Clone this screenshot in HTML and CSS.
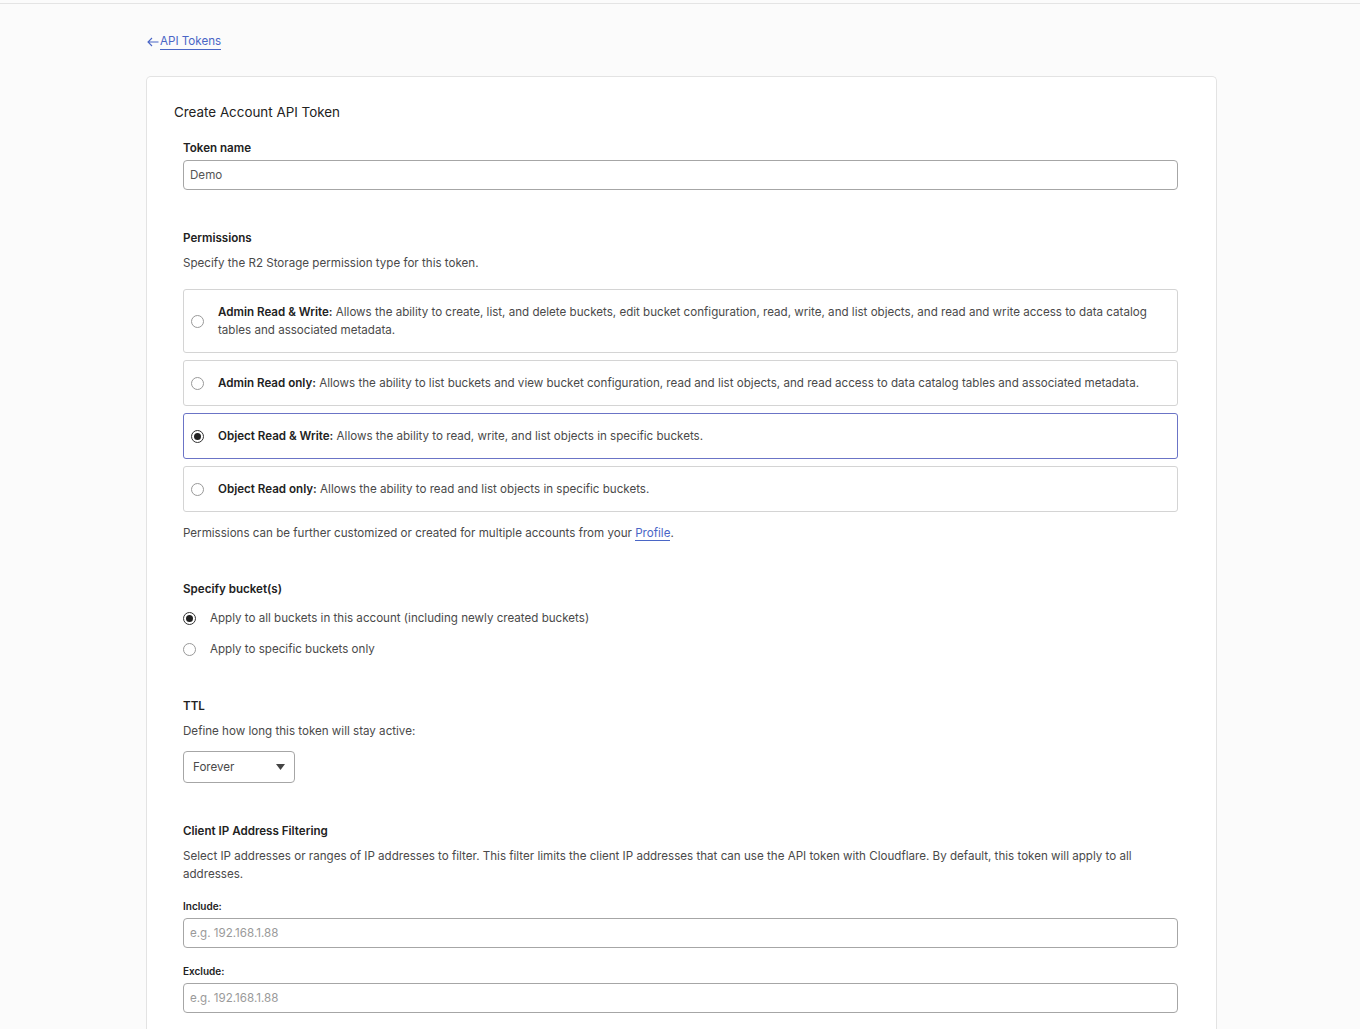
FILE: index.html
```html
<!DOCTYPE html>
<html lang="en">
<head>
    <meta charset="UTF-8">
    <meta name="viewport" content="width=device-width, initial-scale=1.0">
    <title>Create Account API Token</title>
    <link rel="stylesheet" href="styles.css">
</head>
<body>
    <div class="topbar"></div>
    <div class="page">
        <a class="back-link" href="#">
            <svg class="arrow" width="12" height="10" viewBox="0 0 12 10"><path d="M11.5 5H1M5 1L1 5l4 4" fill="none" stroke="#4a66c6" stroke-width="1.1"/></svg>
            <span class="back-text">API Tokens</span>
        </a>

        <div class="card">
            <h2 class="card-title">Create Account API Token</h2>
            <form class="token-form">
                <div class="field">
                    <label class="label" for="tokenName">Token name</label>
                    <input class="text-input" type="text" id="tokenName" value="Demo">
                </div>

                <div class="section">
                    <div class="label">Permissions</div>
                    <p class="help">Specify the R2 Storage permission type for this token.</p>
                    <div class="options">
                        <label class="option">
                            <input type="radio" name="perm">
                            <span><b>Admin Read &amp; Write:</b> Allows the ability to create, list, and delete buckets, edit bucket configuration, read, write, and list objects, and read and write access to data catalog tables and associated metadata.</span>
                        </label>
                        <label class="option">
                            <input type="radio" name="perm">
                            <span><b>Admin Read only:</b> Allows the ability to list buckets and view bucket configuration, read and list objects, and read access to data catalog tables and associated metadata.</span>
                        </label>
                        <label class="option selected">
                            <input type="radio" name="perm" checked>
                            <span><b>Object Read &amp; Write:</b> Allows the ability to read, write, and list objects in specific buckets.</span>
                        </label>
                        <label class="option">
                            <input type="radio" name="perm">
                            <span><b>Object Read only:</b> Allows the ability to read and list objects in specific buckets.</span>
                        </label>
                    </div>
                    <p class="note">Permissions can be further customized or created for multiple accounts from your <a href="#">Profile</a>.</p>
                </div>

                <div class="section">
                    <div class="label">Specify bucket(s)</div>
                    <div class="radio-list">
                        <label class="radio-row"><input type="radio" name="buckets" checked> Apply to all buckets in this account (including newly created buckets)</label>
                        <label class="radio-row"><input type="radio" name="buckets"> Apply to specific buckets only</label>
                    </div>
                </div>

                <div class="section">
                    <div class="label">TTL</div>
                    <p class="help">Define how long this token will stay active:</p>
                    <div class="select">
                        <span>Forever</span>
                        <svg width="9" height="6" viewBox="0 0 9 6"><path d="M0 0h9L4.5 6z" fill="#444"/></svg>
                    </div>
                </div>

                <div class="section">
                    <div class="label">Client IP Address Filtering</div>
                    <p class="help multi">Select IP addresses or ranges of IP addresses to filter. This filter limits the client IP addresses that can use the API token with Cloudflare. By default, this token will apply to all addresses.</p>
                    <div class="ip-field">
                        <label class="small-label" for="include">Include:</label>
                        <input class="text-input" type="text" id="include" placeholder="e.g. 192.168.1.88">
                    </div>
                    <div class="ip-field">
                        <label class="small-label" for="exclude">Exclude:</label>
                        <input class="text-input" type="text" id="exclude" placeholder="e.g. 192.168.1.88">
                    </div>
                </div>
            </form>
        </div>
    </div>
</body>
</html>
```

FILE: styles.css
```css
body {
    margin: 0;
    font-family: Inter, "Noto Sans", Arial, sans-serif;
    font-size: 11.6px;
    color: #3d3d3d;
    background-color: #fbfbfb;
}

.topbar {
    height: 3px;
    border-bottom: 1px solid #e4e4e4;
    background: #fbfbfb;
}

.page {
    padding: 30px 0 0 146px;
    width: 1071px;
}

.back-link {
    display: inline-flex;
    align-items: center;
    color: #4a66c6;
    text-decoration: none;
    font-size: 11.6px;
    line-height: 18px;
    margin-left: 1px;
}

.back-link .arrow {
    margin-right: 1px;
}

.back-link .back-text {
    border-bottom: 1px solid #4a66c6;
    line-height: 15px;
}

.card {
    margin-top: 26px;
    background: #fff;
    border: 1px solid #e3e3e3;
    border-bottom: none;
    border-radius: 5px 5px 0 0;
    padding: 25px 27px 20px;
}

.card-title {
    margin: 0;
    font-size: 13.4px;
    font-weight: 400;
    line-height: 20px;
    color: #222;
}

.token-form {
    padding: 0 11px 0 9px;
}

.field {
    margin-top: 18px;
}

.label {
    display: block;
    font-weight: 600;
    font-size: 11.6px;
    line-height: 16px;
    color: #222;
    margin-bottom: 4px;
}

.text-input {
    display: block;
    box-sizing: border-box;
    width: 100%;
    height: 30px;
    padding: 0 6px;
    border: 1px solid #a6a6a6;
    border-radius: 4px;
    font-family: inherit;
    font-size: 11.6px;
    color: #555;
    background: #fff;
}

.text-input::placeholder {
    color: #9a9a9a;
}

.section {
    margin-top: 40px;
}

.help {
    margin: 9px 0 0;
    line-height: 16px;
    color: #4a4a4a;
}

.help.multi {
    line-height: 18px;
    margin-top: 8px;
}

.options {
    margin-top: 18px;
    display: flex;
    flex-direction: column;
    gap: 7px;
}

.option {
    display: flex;
    align-items: center;
    gap: 14px;
    padding: 13px 20px 13px 7px;
    border: 1px solid #d4d4d4;
    border-radius: 3px;
    line-height: 18px;
    color: #4a4a4a;
}

.option b {
    font-weight: 600;
    color: #222;
}

.option.selected {
    border-color: #6b74c6;
}

input[type="radio"] {
    appearance: none;
    -webkit-appearance: none;
    flex: none;
    width: 13px;
    height: 13px;
    margin: 0;
    border: 1px solid #999;
    border-radius: 50%;
    background: #fff;
    display: inline-grid;
    place-content: center;
}

input[type="radio"]:checked {
    border-color: #333;
}

input[type="radio"]:checked::before {
    content: "";
    width: 7px;
    height: 7px;
    border-radius: 50%;
    background: #222;
}

.note {
    margin: 13px 0 0;
    line-height: 16px;
    color: #4a4a4a;
}

.note a {
    color: #4a66c6;
    text-decoration: none;
    border-bottom: 1px solid #4a66c6;
}

.radio-list {
    margin-top: 12px;
    display: flex;
    flex-direction: column;
    gap: 13px;
}

.radio-row {
    display: flex;
    align-items: center;
    gap: 14px;
    line-height: 18px;
    color: #4a4a4a;
}

.select {
    margin-top: 12px;
    box-sizing: border-box;
    width: 112px;
    height: 32px;
    border: 1px solid #a6a6a6;
    border-radius: 4px;
    display: flex;
    align-items: center;
    justify-content: space-between;
    padding: 0 9px 0 9px;
    color: #4a4a4a;
}

.ip-field {
    margin-top: 16px;
}

.small-label {
    display: block;
    font-size: 10px;
    font-weight: 600;
    line-height: 14px;
    color: #222;
    margin-bottom: 5px;
}
```
